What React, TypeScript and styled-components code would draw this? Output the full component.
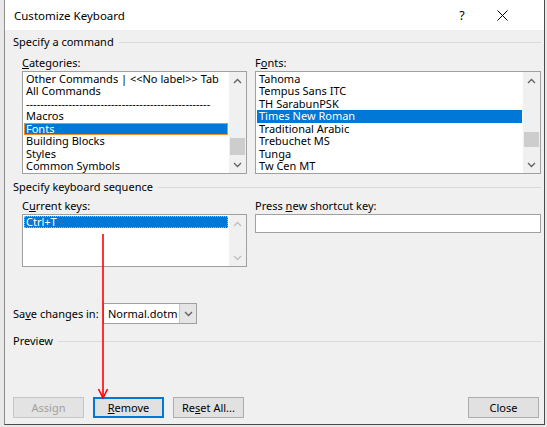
import React from "react";
import styled, {createGlobalStyle} from "styled-components";

const GlobalStyle = createGlobalStyle`
  html, body {
    margin: 0;
    padding: 0;
    background: #e9e9e9;
  }
  body {
    font-family: "Segoe UI", "Noto Sans", "Open Sans", sans-serif;
    font-size: 11px;
    color: #000;
  }
`;

const Window = styled.div`
  position: relative;
  margin-left: 4px;
  width: 539px;
  height: 424px;
  background: #f0f0f0;
  border-left: 1px solid #8c8c8c;
  border-right: 1px solid #4a4a4a;
  border-bottom: 1px solid #4a4a4a;
  display: flex;
  flex-direction: column;
  overflow: hidden;
`;

const TitleBar = styled.div`
  height: 30px;
  background: #fff;
  display: flex;
  align-items: center;
  padding-left: 9px;
  padding-right: 22px;
  flex-shrink: 0;
`;

const Title = styled.div`
  flex: 1;
  font-size: 11.5px;
`;

const TitleButton = styled.div`
  width: 40px;
  height: 30px;
  display: flex;
  align-items: center;
  justify-content: center;
  font-size: 12.5px;
`;

const Body = styled.div`
  flex: 1;
  display: flex;
  flex-direction: column;
  padding: 0 3px 0 8px;
`;

const SectionHeader = styled.div<{$top: number}>`
  margin-top: ${(p) => p.$top}px;
  height: 14px;
  line-height: 14px;
  display: flex;
  align-items: center;
  gap: 5px;
  white-space: nowrap;
  &::after {
    content: "";
    flex: 1;
    border-top: 1px solid #d9d9d9;
  }
`;

const Group = styled.div<{$top: number}>`
  margin-top: ${(p) => p.$top}px;
  padding-left: 9px;
  display: grid;
  grid-template-columns: 225px 1fr;
  column-gap: 8px;
`;

const Field = styled.div`
  display: flex;
  flex-direction: column;
`;

const Label = styled.div`
  height: 16px;
  line-height: 16px;
  white-space: nowrap;
`;

const Key = styled.span`
  text-decoration: underline;
  text-underline-offset: 1px;
`;

const ListBox = styled.div<{$height: number}>`
  height: ${(p) => p.$height}px;
  box-sizing: border-box;
  border: 1px solid #a0a0a0;
  background: #fff;
  display: flex;
`;

const Items = styled.div`
  flex: 1;
  min-width: 0;
  padding: 1px 1px 0 1px;
`;

const Item = styled.div<{$selected?: boolean; $ring?: "orange" | "dotted"}>`
  height: 12.43px;
  line-height: 12.43px;
  padding-left: 2px;
  white-space: nowrap;
  box-sizing: border-box;
  background: ${(p) => (p.$selected ? "#0078d7" : "transparent")};
  color: ${(p) => (p.$selected ? "#fff" : "#000")};
  box-shadow: ${(p) => (p.$ring === "orange" ? "inset 0 0 0 1px #f08c28" : "none")};
  outline: ${(p) => (p.$ring === "dotted" ? "1px dotted #8cc4f0" : "none")};
  outline-offset: -1px;
`;

const ScrollBar = styled.div`
  width: 17px;
  flex-shrink: 0;
  background: #f0f0f0;
  display: flex;
  flex-direction: column;
`;

const Arrow = styled.div`
  height: 17px;
  display: flex;
  align-items: center;
  justify-content: center;
  flex-shrink: 0;
`;

const Track = styled.div`
  flex: 1;
  display: flex;
  flex-direction: column;
`;

const Thumb = styled.div<{$top: number; $size: number}>`
  margin-top: ${(p) => p.$top}px;
  height: ${(p) => p.$size}px;
  margin-left: 1px;
  margin-right: 1px;
  background: #cdcdcd;
`;

const TextInput = styled.div`
  height: 19px;
  box-sizing: border-box;
  border: 1px solid #a0a0a0;
  background: #fff;
`;

const SaveRow = styled.div`
  margin-top: 36px;
  height: 21px;
  display: flex;
  align-items: center;
`;

const SaveLabel = styled.div`
  width: 90px;
  white-space: nowrap;
`;

const Combo = styled.div`
  width: 94px;
  height: 21px;
  box-sizing: border-box;
  border: 1px solid #a0a0a0;
  background: #fff;
  display: flex;
`;

const ComboText = styled.div`
  flex: 1;
  padding-left: 4px;
  line-height: 19px;
  white-space: nowrap;
`;

const ComboButton = styled.div`
  width: 16px;
  background: #e5e5e5;
  border-left: 1px solid #c8c8c8;
  display: flex;
  align-items: center;
  justify-content: center;
`;

const ButtonRow = styled.div`
  margin-top: 49px;
  display: flex;
  gap: 9px;
  padding-right: 2px;
`;

const Button = styled.div<{$variant?: "default" | "disabled" | "focused"}>`
  width: 71px;
  height: 21px;
  box-sizing: border-box;
  display: flex;
  align-items: center;
  justify-content: center;
  white-space: nowrap;
  background: ${(p) => (p.$variant === "disabled" ? "#e3e3e3" : "#e1e1e1")};
  color: ${(p) => (p.$variant === "disabled" ? "#a0a0a0" : "#000")};
  border: ${(p) =>
    p.$variant === "focused"
      ? "2px solid #0078d7"
      : p.$variant === "disabled"
      ? "1px solid #c6c6c6"
      : "1px solid #adadad"};
`;

const Spacer = styled.div`
  flex: 1;
`;

const Annotation = styled.svg`
  position: absolute;
  left: 89px;
  top: 234px;
  pointer-events: none;
`;

const Chevron = ({up, color}: {up?: boolean; color: string}) => (
  <svg width="9" height="6" viewBox="0 0 9 6">
    <path
      d={up ? "M1 5 L4.5 1.5 L8 5" : "M1 1 L4.5 4.5 L8 1"}
      fill="none"
      stroke={color}
      strokeWidth="1.3"
    />
  </svg>
);

const Scroll = ({thumbTop, thumbSize, disabled}: {thumbTop?: number; thumbSize?: number; disabled?: boolean}) => {
  const color = disabled ? "#bfbfbf" : "#606060";
  return (
    <ScrollBar>
      <Arrow>
        <Chevron up color={color} />
      </Arrow>
      <Track>
        {thumbSize ? <Thumb $top={thumbTop ?? 0} $size={thumbSize} /> : null}
      </Track>
      <Arrow>
        <Chevron color={color} />
      </Arrow>
    </ScrollBar>
  );
};

const categories = [
  "Other Commands | <<No label>> Tab",
  "All Commands",
  "----------------------------------------------------",
  "Macros",
  "Fonts",
  "Building Blocks",
  "Styles",
  "Common Symbols",
];

const fonts = [
  "Tahoma",
  "Tempus Sans ITC",
  "TH SarabunPSK",
  "Times New Roman",
  "Traditional Arabic",
  "Trebuchet MS",
  "Tunga",
  "Tw Cen MT",
];

const App: React.FC = () => {
  return (
    <>
      <GlobalStyle />
      <Window>
        <TitleBar>
          <Title>Customize Keyboard</Title>
          <TitleButton>?</TitleButton>
          <TitleButton>
            <svg width="11" height="11" viewBox="0 0 11 11">
              <path d="M0.5 0.5 L10.5 10.5 M10.5 0.5 L0.5 10.5" stroke="#000" strokeWidth="1" />
            </svg>
          </TitleButton>
        </TitleBar>

        <Body>
          <SectionHeader $top={5}>Specify a command</SectionHeader>
          <Group $top={6}>
            <Field>
              <Label>
                <Key>C</Key>ategories:
              </Label>
              <ListBox $height={103}>
                <Items>
                  {categories.map((c) => (
                    <Item key={c} $selected={c === "Fonts"} $ring={c === "Fonts" ? "orange" : undefined}>
                      {c}
                    </Item>
                  ))}
                </Items>
                <Scroll thumbTop={49} thumbSize={17} />
              </ListBox>
            </Field>
            <Field>
              <Label>
                F<Key>o</Key>nts:
              </Label>
              <ListBox $height={103}>
                <Items>
                  {fonts.map((f) => (
                    <Item key={f} $selected={f === "Times New Roman"}>
                      {f}
                    </Item>
                  ))}
                </Items>
                <Scroll thumbTop={43} thumbSize={15} />
              </ListBox>
            </Field>
          </Group>

          <SectionHeader $top={6}>Specify keyboard sequence</SectionHeader>
          <Group $top={4}>
            <Field>
              <Label>
                C<Key>u</Key>rrent keys:
              </Label>
              <ListBox $height={53}>
                <Items>
                  <Item $selected $ring="dotted">Ctrl+T</Item>
                </Items>
                <Scroll disabled />
              </ListBox>
            </Field>
            <Field>
              <Label>
                Press <Key>n</Key>ew shortcut key:
              </Label>
              <TextInput />
            </Field>
          </Group>

          <SaveRow>
            <SaveLabel>
              Sa<Key>v</Key>e changes in:
            </SaveLabel>
            <Combo>
              <ComboText>Normal.dotm</ComboText>
              <ComboButton>
                <Chevron color="#606060" />
              </ComboButton>
            </Combo>
          </SaveRow>

          <SectionHeader $top={10}>Preview</SectionHeader>

          <ButtonRow>
            <Button $variant="disabled">Assign</Button>
            <Button $variant="focused">
              <span>
                <Key>R</Key>emove
              </span>
            </Button>
            <Button>
              <span>
                Re<Key>s</Key>et All...
              </span>
            </Button>
            <Spacer />
            <Button>Close</Button>
          </ButtonRow>
        </Body>

        <Annotation width="18" height="166" viewBox="0 0 18 166">
          <path d="M9 0 L9 163" stroke="#f00" strokeWidth="1.6" fill="none" />
          <path d="M4.5 155 L9 164 L13.5 155" stroke="#f00" strokeWidth="1.6" fill="none" />
        </Annotation>
      </Window>
    </>
  );
};

export default App;
